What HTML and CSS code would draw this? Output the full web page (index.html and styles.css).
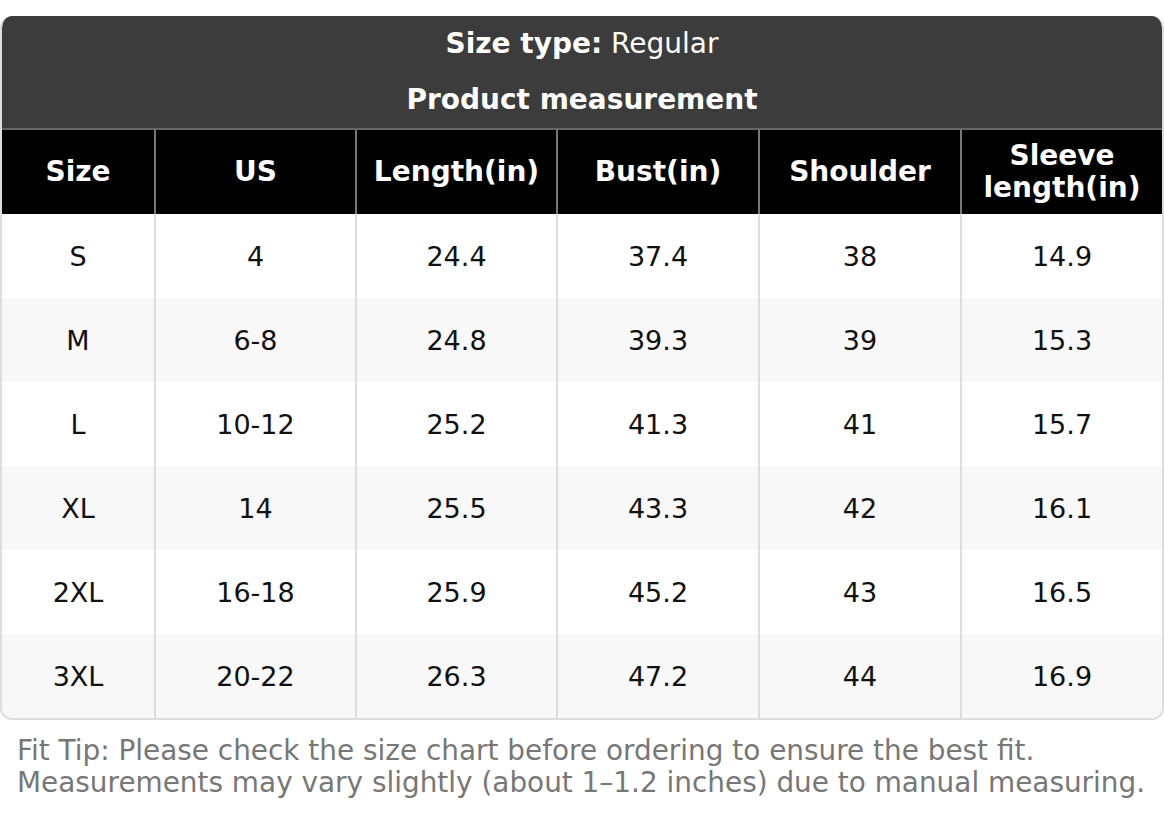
FILE: index.html
```html
<!DOCTYPE html>
<html>
<head>
<meta charset="utf-8">
<link rel="stylesheet" href="styles.css">
</head>
<body>
<div class="page">
  <div class="card">
    <div class="title">
      <div class="title-line"><b>Size type:</b> Regular</div>
      <div class="title-line"><b>Product measurement</b></div>
    </div>
    <table class="chart">
      <colgroup>
        <col class="c1"><col class="c2"><col class="c3"><col class="c4"><col class="c5"><col class="c6">
      </colgroup>
      <thead>
        <tr><th>Size</th><th>US</th><th>Length(in)</th><th>Bust(in)</th><th>Shoulder</th><th>Sleeve<br>length(in)</th></tr>
      </thead>
      <tbody>
        <tr><td>S</td><td>4</td><td>24.4</td><td>37.4</td><td>38</td><td>14.9</td></tr>
        <tr><td>M</td><td>6-8</td><td>24.8</td><td>39.3</td><td>39</td><td>15.3</td></tr>
        <tr><td>L</td><td>10-12</td><td>25.2</td><td>41.3</td><td>41</td><td>15.7</td></tr>
        <tr><td>XL</td><td>14</td><td>25.5</td><td>43.3</td><td>42</td><td>16.1</td></tr>
        <tr><td>2XL</td><td>16-18</td><td>25.9</td><td>45.2</td><td>43</td><td>16.5</td></tr>
        <tr><td>3XL</td><td>20-22</td><td>26.3</td><td>47.2</td><td>44</td><td>16.9</td></tr>
      </tbody>
    </table>
  </div>
  <p class="tip">Fit Tip: Please check the size chart before ordering to ensure the best fit.<br>Measurements may vary slightly (about 1–1.2 inches) due to manual measuring.</p>
</div>
</body>
</html>
```
FILE: styles.css
```css
html, body {
  margin: 0;
  padding: 0;
  background: #fff;
}
body {
  font-family: "DejaVu Sans", sans-serif;
  color: #111;
}
.page {
  padding-top: 16px;
}
.card {
  border: 2px solid #ddd;
  border-top: none;
  border-radius: 12px;
  overflow: hidden;
}
.title {
  background: #3c3c3c;
  color: #fff;
  text-align: center;
  font-size: 28px;
  border-bottom: 2px solid #666;
}
.title-line {
  height: 56px;
  line-height: 56px;
}
.chart {
  width: 100%;
  border-collapse: collapse;
  table-layout: fixed;
  font-size: 27px;
}
.c1 { width: 153px; }
.c2 { width: 201px; }
.c3 { width: 201px; }
.c4 { width: 202px; }
.c5 { width: 202px; }
.c6 { width: auto; }
.chart th {
  background: #000;
  color: #fff;
  font-weight: bold;
  font-size: 28px;
  height: 84px;
  padding: 0;
  line-height: 32px;
  border-left: 2px solid #777;
}
.chart td {
  height: 84px;
  padding: 0;
  text-align: center;
  border-left: 2px solid #ddd;
}
.chart th:first-child, .chart td:first-child {
  border-left: none;
}
.chart tbody tr:nth-child(even) td {
  background: #f8f8f8;
}
.tip {
  margin: 15px 0 0;
  padding: 0 0 0 17px;
  font-size: 27.9px;
  line-height: 32px;
  color: #777;
  white-space: nowrap;
}
```
